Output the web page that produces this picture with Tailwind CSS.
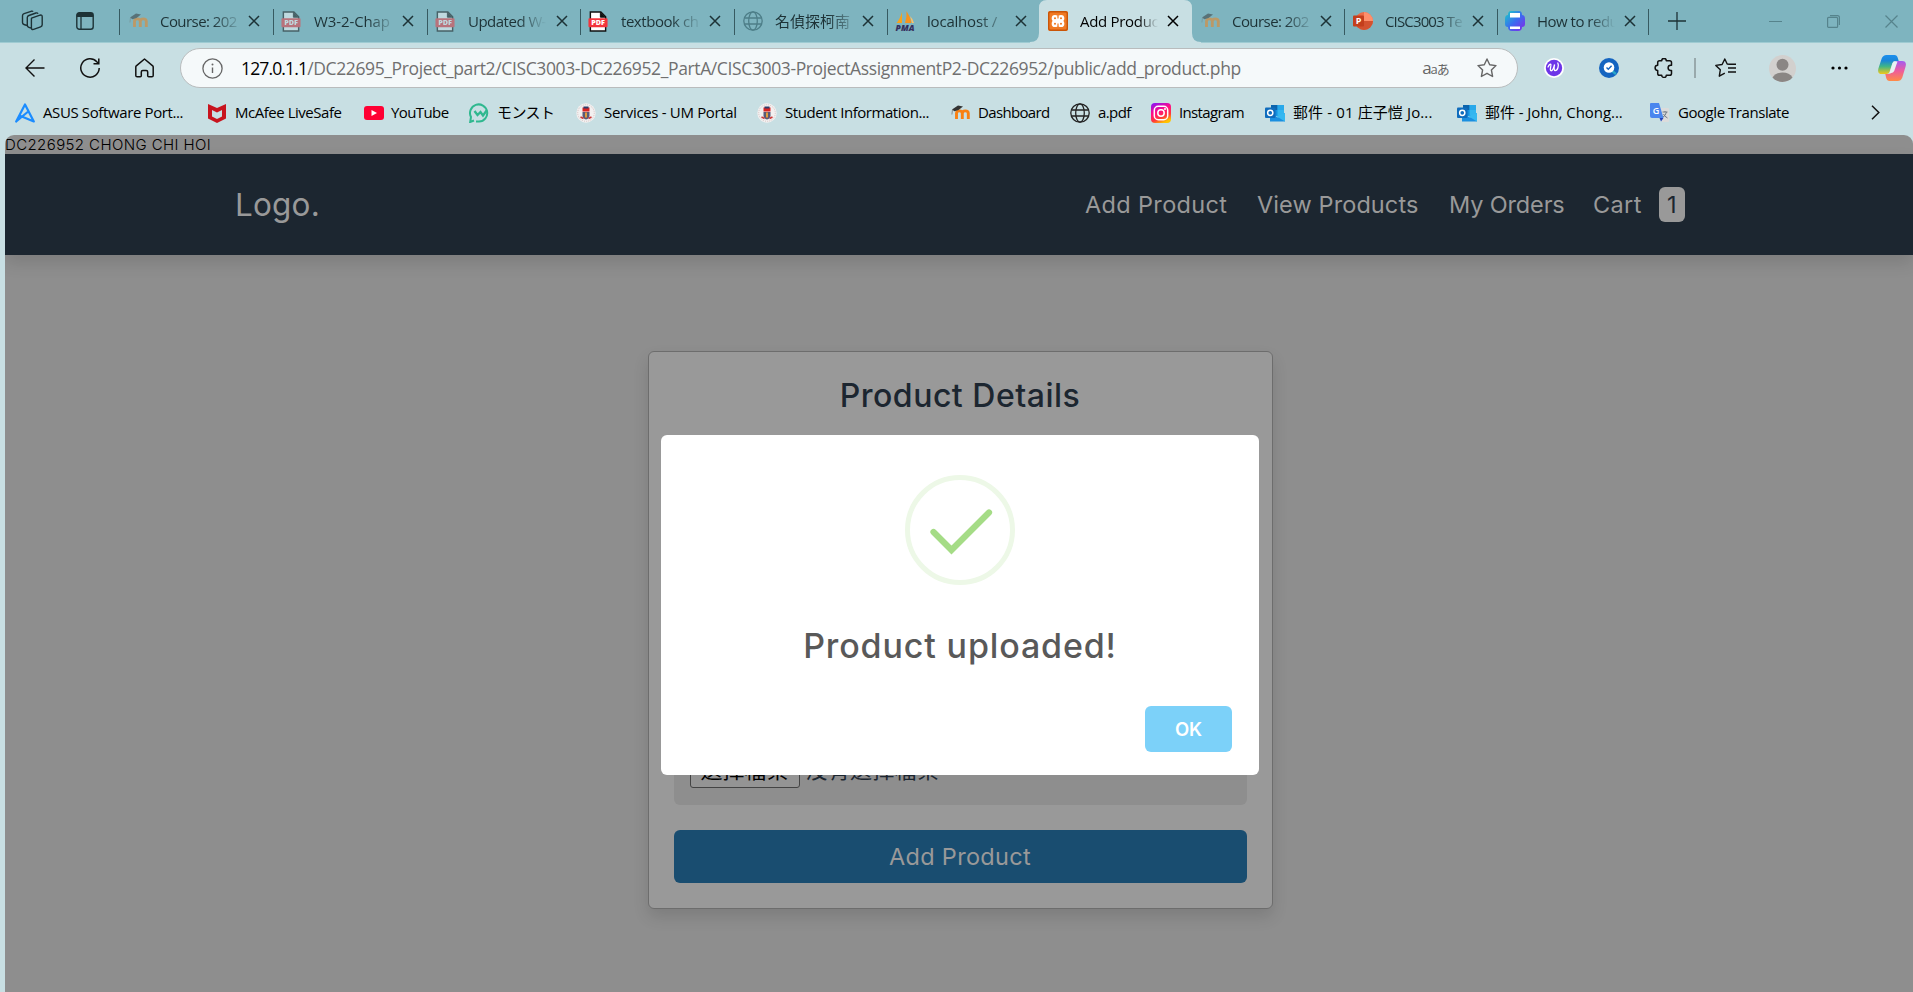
<!DOCTYPE html>
<html lang="zh-Hant">
<head>
<meta charset="utf-8">
<title>Add Product</title>
<script src="https://cdn.jsdelivr.net/npm/@tailwindcss/browser@4"></script>
</head>
<body class="w-[1913px] h-[992px] overflow-hidden bg-[#c8dfe3] font-['Open_Sans','Noto_Sans_CJK_TC',sans-serif] text-black">
<svg class="absolute size-0">
  <symbol id="x" viewBox="0 0 12 12"><path d="M1 1l10 10M11 1L1 11" fill="none" stroke="currentColor" stroke-width="1.5"/></symbol>
  <symbol id="moodle" viewBox="0 0 20 20"><path d="M5.500 16V10.500q0-2.600 2.900-2.600t2.900 2.600V16M11.300 10.500q0-2.600 3-2.600t3 2.600V16" fill="none" stroke="#f98012" stroke-width="2.900"/><path d="M1 6.500l6-4 5 1-4.500 3.500-4 1.200z" fill="#333"/><path d="M1.500 6.500l-.6 5" stroke="#777" stroke-width=".8"/></symbol>
  <symbol id="pdf" viewBox="0 0 20 22"><path d="M2 1h11l5 5v15H2z" fill="#fff" stroke="#111" stroke-width="1.500"/><path d="M12.500 1v5.500H18" fill="#111" stroke="#111"/><rect x="0" y="7.500" width="20" height="9.500" rx="1" fill="#f3343b"/><text x="10" y="15" font-family="Open Sans" font-weight="800" font-size="7.500" text-anchor="middle" fill="#fff">PDF</text></symbol>
  <symbol id="globe" viewBox="0 0 20 20"><g fill="none" stroke="currentColor" stroke-width="1.300"><circle cx="10" cy="10" r="9.200"/><ellipse cx="10" cy="10" rx="4.300" ry="9.200"/><path d="M1.500 7h17M1.500 13h17"/></g></symbol>
  <symbol id="um" viewBox="0 0 20 20"><circle cx="10" cy="10" r="9.700" fill="#f3f0f0"/><circle cx="10" cy="10" r="8.300" fill="none" stroke="#d5c3c3" stroke-width="1" stroke-dasharray="1 1"/><path d="M6.500 4.500h7v4h-7z" fill="#d92323"/><path d="M7.500 3.500h5v2h-5z" fill="#2c3c6b"/><path d="M6.500 9h7v3.500q0 3-3.500 4-3.500-1-3.500-4z" fill="#5b5a77"/><path d="M9 9.500h2v5H9z" fill="#e29a3a"/><path d="M4.500 14l3 1.500M15.500 14l-3 1.500" stroke="#c33" stroke-width="1.500"/></symbol>
  <symbol id="outlook" viewBox="0 0 20 20"><path d="M6 2h13v11H6z" fill="#1490df"/><path d="M6 2h6.500v5H6z" fill="#0a64ad"/><path d="M12.500 2H19v5h-6.500z" fill="#28a8ea"/><path d="M12.500 7H19v5h-6.500z" fill="#50d9ff" opacity=".5"/><path d="M5 18.500V10l8 4.500L20 10v8.500z" fill="#1a8fe0"/><path d="M20 18.500L11 13l9-3z" fill="#35b8f1"/><rect x="0" y="4.500" width="10.500" height="10.500" rx="1" fill="#0f6cbd"/><circle cx="5.250" cy="9.800" r="2.600" fill="none" stroke="#fff" stroke-width="1.500"/></symbol>
  <linearGradient id="pr" x1="0" y1="0" x2="1" y2="1"><stop offset="0" stop-color="#18d0c4"/><stop offset=".5" stop-color="#3a6df0"/><stop offset="1" stop-color="#8a22e8"/></linearGradient>
  <linearGradient id="ig" x1="0.150" y1="0" x2=".6" y2="1"><stop offset="0" stop-color="#8a14f5"/><stop offset=".4" stop-color="#ff0a8a"/><stop offset=".75" stop-color="#ff3a3a"/><stop offset="1" stop-color="#ffc400"/></linearGradient>
  <linearGradient id="c1" x1="0" y1="0" x2="0" y2="1"><stop offset="0" stop-color="#1b8fee"/><stop offset=".3" stop-color="#1a86d8"/><stop offset=".6" stop-color="#3fb587"/><stop offset="1" stop-color="#f2c81a"/></linearGradient>
  <linearGradient id="c2" x1="0" y1="0" x2="0" y2="1"><stop offset="0" stop-color="#a35af0"/><stop offset=".5" stop-color="#ee5c9c"/><stop offset="1" stop-color="#ff8b45"/></linearGradient>
</svg>

<!-- Tab strip -->
<header class="flex h-[43px] border-b border-[#9fcbd2] bg-[#7eb4bf] text-[15px] text-[#1d3236]">
  <div class="flex w-[119px] items-center gap-[32px] pl-[21px]">
    <svg class="w-[23px] h-[22px]" viewBox="0 0 23 22" fill="none" stroke="#1d3236" stroke-width="1.400" stroke-linejoin="round"><path d="M10.500 8.200l8.500-3q2.200-.6 2.200 1.500v8q0 1.500-1.600 2.100l-7 2.600q-2.200.6-2.200-1.400V9.600q0-1 .1-1.400z"/><path d="M10 18l-2.200-.7q-1.500-.5-1.500-2V7.600q0-1.500 1.600-2.100l7-2.500q1.600-.4 2.100.8"/><path d="M6 15.500l-3-1q-1.500-.5-1.500-2V5.800q0-1.500 1.600-2.100l7-2.400q1.500-.4 2 .4"/></svg>
    <svg class="w-[18px] h-[18px]" viewBox="0 0 18 18"><rect x=".8" y=".8" width="16.400" height="16.400" rx="2.500" fill="none" stroke="#1d3236" stroke-width="1.400"/><path d="M.8 5V3Q.8.800 3 .8h12q2.200 0 2.200 2.200v2z" fill="#1d3236"/><path d="M5 5v12" stroke="#1d3236" stroke-width="1.300"/></svg>
  </div>
  <div class="relative flex w-[154px] items-center pl-[10px]"><i class="absolute left-0 top-[9px] h-[26px] w-px bg-[#375a61]"></i><svg class="size-5 opacity-50"><use href="#moodle"/></svg><span class="ml-[11px] w-[78px] overflow-hidden whitespace-nowrap tracking-[-0.55px] [mask-image:linear-gradient(to_right,black_68%,rgba(0,0,0,0.15))]">Course: 202</span><svg class="ml-[10px] size-3"><use href="#x"/></svg></div>
  <div class="relative flex w-[154px] items-center pl-[8px]"><i class="absolute left-0 top-[9px] h-[26px] w-px bg-[#375a61]"></i><svg class="w-5 h-[21px] opacity-50"><use href="#pdf"/></svg><span class="ml-[13px] w-[78px] overflow-hidden whitespace-nowrap tracking-[-0.1px] [mask-image:linear-gradient(to_right,black_68%,rgba(0,0,0,0.15))]">W3-2-Chap</span><svg class="ml-[10px] size-3"><use href="#x"/></svg></div>
  <div class="relative flex w-[153px] items-center pl-[8px]"><i class="absolute left-0 top-[9px] h-[26px] w-px bg-[#375a61]"></i><svg class="w-5 h-[21px] opacity-50"><use href="#pdf"/></svg><span class="ml-[13px] w-[78px] overflow-hidden whitespace-nowrap tracking-[-0.5px] [mask-image:linear-gradient(to_right,black_65%,transparent)]">Updated W-</span><svg class="ml-[10px] size-3"><use href="#x"/></svg></div>
  <div class="relative flex w-[154px] items-center pl-[8px]"><i class="absolute left-0 top-[9px] h-[26px] w-px bg-[#375a61]"></i><svg class="w-5 h-[21px]"><use href="#pdf"/></svg><span class="ml-[13px] w-[78px] overflow-hidden whitespace-nowrap tracking-[-0.45px] [mask-image:linear-gradient(to_right,black_65%,rgba(0,0,0,0.1))]">textbook ch</span><svg class="ml-[10px] size-3"><use href="#x"/></svg></div>
  <div class="relative flex w-[153px] items-center pl-[9px]"><i class="absolute left-0 top-[9px] h-[26px] w-px bg-[#375a61]"></i><svg class="size-5 text-[#4d7e88]"><use href="#globe"/></svg><span class="ml-[12px] w-[78px] overflow-hidden whitespace-nowrap [mask-image:linear-gradient(to_right,black_68%,rgba(0,0,0,0.2))]">名偵探柯南</span><svg class="ml-[9px] size-3"><use href="#x"/></svg></div>
  <div class="relative flex w-[153px] items-center pl-[8px]"><i class="absolute left-0 top-[9px] h-[26px] w-px bg-[#375a61]"></i>
    <svg class="size-5" viewBox="0 0 20 20"><path d="M7 1v11H1.500Q5 8 7 1z" fill="#f7a21b"/><path d="M11.500 0q4 6 5 12h-6.500q2-6 1.500-12z" fill="#f7931e"/><path d="M15 5q3 3 4 7h-2z" fill="#fbc36b"/><text x="10" y="19.500" font-family="Open Sans" font-style="italic" font-weight="800" font-size="8.500" text-anchor="middle" textLength="19" fill="#35305e">PMA</text></svg>
    <span class="ml-[12px] w-[78px] overflow-hidden whitespace-nowrap tracking-[-0.2px] [mask-image:linear-gradient(to_right,black_65%,rgba(0,0,0,0.2))]">localhost /</span><svg class="ml-[10px] size-3"><use href="#x"/></svg></div>
  <div class="relative h-[43px] w-[152px] text-black">
    <svg class="absolute -left-[10px] top-0 w-[171px] h-[43px]" viewBox="0 0 171 43"><path d="M0 43v-1q9 0 9-9V8Q9 0 17 0h137q8 0 8 8v25q0 9 9 9v1z" fill="#c8dfe3"/></svg>
    <div class="relative flex h-[42px] items-center pl-[8px]">
      <svg class="size-5" viewBox="0 0 20 20"><rect width="20" height="20" rx="2" fill="#f07a24"/><rect x=".7" y=".7" width="18.600" height="18.600" rx="2" fill="none" stroke="#c95508" stroke-width="1.400"/><g fill="none" stroke="#fff" stroke-width="2.300"><circle cx="7" cy="7.300" r="2.200"/><circle cx="13" cy="7.300" r="2.200"/><circle cx="7" cy="12.700" r="2.200"/><circle cx="13" cy="12.700" r="2.200"/></g><path d="M8 8.500h4v3H8z" fill="#fff"/><path d="M10 5v2.500M10 12.500V15" stroke="#f07a24" stroke-width="1.200"/></svg>
      <span class="ml-[12px] w-[78px] overflow-hidden whitespace-nowrap tracking-[-0.3px] [mask-image:linear-gradient(to_right,black_75%,transparent)]">Add Produc</span><svg class="ml-[9px] size-3"><use href="#x"/></svg>
    </div>
  </div>
  <div class="relative flex w-[152px] items-center pl-[9px]"><svg class="size-5 opacity-50"><use href="#moodle"/></svg><span class="ml-[11px] w-[78px] overflow-hidden whitespace-nowrap tracking-[-0.55px] [mask-image:linear-gradient(to_right,black_68%,rgba(0,0,0,0.15))]">Course: 202</span><svg class="ml-[10px] size-3"><use href="#x"/></svg></div>
  <div class="relative flex w-[153px] items-center pl-[9px]"><i class="absolute left-0 top-[9px] h-[26px] w-px bg-[#375a61]"></i>
    <svg class="size-5" viewBox="0 0 20 20"><circle cx="11" cy="10" r="9" fill="#ed6c47"/><path d="M11 1a9 9 0 0 1 9 9h-9z" fill="#ff8f6b"/><path d="M20 10a9 9 0 0 1-18 0z" fill="#d35230"/><rect x="0" y="4.500" width="11" height="11" rx="1" fill="#c43e1c"/><text x="5.500" y="13.300" font-family="Open Sans" font-weight="700" font-size="9" text-anchor="middle" fill="#fff">P</text></svg>
    <span class="ml-[12px] w-[78px] overflow-hidden whitespace-nowrap tracking-[-0.85px] [mask-image:linear-gradient(to_right,black_70%,rgba(0,0,0,0.1))]">CISC3003 Te</span><svg class="ml-[9px] size-3"><use href="#x"/></svg></div>
  <div class="relative flex w-[152px] items-center pl-[8px]"><i class="absolute left-0 top-[9px] h-[26px] w-px bg-[#375a61]"></i><i class="absolute right-0 top-[9px] h-[26px] w-px bg-[#375a61]"></i>
    <svg class="size-5" viewBox="0 0 20 20"><path d="M6 0h8q3 0 3 4 3 0 3 4v5q0 3-3 3 0 4-4 4H7q-4 0-4-4-3 0-3-3V8q0-4 3-4 0-4 3-4z" fill="url(#pr)"/><rect x="5" y="2" width="10" height="4.500" fill="#fff"/><rect x="5" y="15.500" width="10" height="2.500" fill="#fff"/></svg>
    <span class="ml-[12px] w-[78px] overflow-hidden whitespace-nowrap tracking-[-0.5px] [mask-image:linear-gradient(to_right,black_68%,transparent)]">How to redu</span><svg class="ml-[9px] size-3"><use href="#x"/></svg></div>
  <div class="flex flex-1 items-center pl-[19px]">
    <svg class="size-[18px]" viewBox="0 0 18 18"><path d="M9 0v18M0 9h18" stroke="#1d3236" stroke-width="1.300"/></svg>
    <svg class="ml-[83px] w-[13px] h-px" viewBox="0 0 13 1"><path d="M0 .5h13" stroke="#56838c"/></svg>
    <svg class="ml-[45px] size-[13px]" viewBox="0 0 13 13" fill="none" stroke="#56838c" stroke-width="1.200"><rect x=".6" y="2.400" width="10" height="10" rx="1"/><path d="M3 .6h7.500q1.900 0 1.900 1.900V10"/></svg>
    <svg class="ml-[45px] size-[13px]" viewBox="0 0 13 13"><path d="M.5.500l12 12M12.500.500l-12 12" stroke="#56838c" stroke-width="1.200"/></svg>
  </div>
</header>

<!-- Toolbar -->
<div class="flex h-[50px] items-center pl-[7px]">
  <div class="flex w-[55px] justify-center"><svg class="size-[20px]" viewBox="0 0 20 20" fill="none" stroke="#111" stroke-width="1.400"><path d="M19.500 10H1M9.500 1.500L1 10l8.500 8.500"/></svg></div>
  <div class="flex w-[55px] justify-center"><svg class="size-[20px]" viewBox="0 0 20 20" fill="none" stroke="#111" stroke-width="1.500"><path d="M19.200 10A9.200 9.200 0 1 1 16.800 3.800L18.500 5.500M18.800.500v5.300h-5.300"/></svg></div>
  <div class="flex w-[55px] justify-center"><svg class="w-[19px] h-[20px]" viewBox="0 0 19 20" fill="none" stroke="#111" stroke-width="1.500" stroke-linejoin="round"><path d="M9.500 1L1.300 7.800q-.5.500-.5 1.200v8.500q0 1.300 1.300 1.300h3.200q1 0 1-1V14q0-1.500 1.500-1.500h3.400q1.500 0 1.500 1.500v3.800q0 1 1 1h3.200q1.300 0 1.300-1.300V9q0-.7-.5-1.200z"/></svg></div>
  <div class="ml-[8px] flex h-[40px] w-[1338px] shrink-0 items-center rounded-full border border-[#b9bcbd] bg-[#f5f9fa] pl-[21px] pr-[20px]">
    <svg class="size-[21px]" viewBox="0 0 21 21"><circle cx="10.500" cy="10.500" r="9.600" fill="none" stroke="#666" stroke-width="1.300"/><path d="M10.500 9.500V15" stroke="#666" stroke-width="1.400"/><circle cx="10.500" cy="6.500" r="1" fill="#666"/></svg>
    <span class="ml-[18px] whitespace-nowrap text-[17.5px] tracking-[-0.38px] text-[#707070]"><span class="tracking-[-0.85px] text-black">127.0.1.1</span>/DC22695_Project_part2/CISC3003-DC226952_PartA/CISC3003-ProjectAssignmentP2-DC226952/public/add_product.php</span>
    <span class="ml-auto flex items-baseline whitespace-nowrap text-[#666]"><span class="text-[17px] tracking-[-1.2px]">a</span><span class="text-[13px] tracking-[-0.8px]">aあ</span></span>
    <svg class="ml-[28px] size-[20px]" viewBox="0 0 20 20"><path d="M10 1l2.700 5.800 6.300.8-4.600 4.400 1.200 6.500L10 15.300l-5.600 3.200L5.600 12 1 7.600l6.300-.8z" fill="none" stroke="#666" stroke-width="1.400" stroke-linejoin="round"/></svg>
  </div>
  <div class="ml-[8px] flex w-[55px] justify-center"><svg class="size-5" viewBox="0 0 20 20"><circle cx="10" cy="10" r="10" fill="#fff"/><circle cx="10" cy="10" r="8.200" fill="#6d35e8"/><path d="M4 9q1.800-3.500 2.800-2.800c.9.800-1.600 5.500.1 6.500 1.900.6 3.300-4.500 3.700-6.200-.6 2.300-1 6 .7 6.100 2.200 0 4-5 2.500-7.600" fill="none" stroke="#fff" stroke-width="1.300" stroke-linecap="round"/></svg></div>
  <div class="flex w-[55px] justify-center"><svg class="size-5" viewBox="0 0 20 20"><circle cx="10" cy="10" r="10" fill="#1464c0"/><path d="M13 13l4 3" stroke="#2aa7c9" stroke-width="2.200"/><circle cx="10" cy="9.500" r="5.300" fill="#fff"/><path d="M7.500 9.500l1.800 1.800 3.300-3.500" fill="none" stroke="#1464c0" stroke-width="1.400"/></svg></div>
  <div class="flex w-[55px] justify-center"><svg class="size-5" viewBox="0 0 20 20"><path d="M5.500 2.700h2.200a2.300 2.300 0 0 1 4.600 0h3.400q1.800 0 1.800 1.800v2.700h-.8a2.500 2.500 0 0 0 0 5.200h.8v3q0 1.800-1.800 1.800h-3.400a2.300 2.300 0 0 1-4.600 0H5.500q-1.800 0-1.800-1.800v-3a2.500 2.500 0 0 1 0-5.200V4.500q0-1.800 1.800-1.800z" fill="none" stroke="#111" stroke-width="1.500" stroke-linejoin="round"/></svg></div>
  <i class="ml-[3px] h-5 w-[2px] bg-[#99a9ac]"></i>
  <div class="ml-[2px] flex w-[55px] justify-center"><svg class="w-[21px] h-5" viewBox="0 0 21 20" fill="none" stroke="#111" stroke-width="1.400" stroke-linejoin="round"><path d="M14.500 6.300l-2.300-.3L9.800 1 7.100 6.500.8 7.400l4.500 4.400-1 6.400 5.500-3M13 10h8M13 14h8M14 6.300h7"/></svg></div>
  <div class="ml-[1px] flex w-[57px] justify-center"><svg class="size-[27px]" viewBox="0 0 27 27"><circle cx="13.500" cy="13.500" r="13.500" fill="#d2d0ce"/><circle cx="13.500" cy="9.700" r="6" fill="#8a8684"/><path d="M3.500 22.500q3-5 10-5t10 5a13.500 13.500 0 0 1-20 0z" fill="#8a8684"/></svg></div>
  <div class="flex w-[56px] justify-center"><svg class="w-[17px] h-[4px]" viewBox="0 0 17 4"><circle cx="2" cy="2" r="1.600"/><circle cx="8.500" cy="2" r="1.600"/><circle cx="15" cy="2" r="1.600"/></svg></div>
  <svg class="ml-[11px] size-7 shrink-0" viewBox="0 0 28 28"><path d="M8.500 1h8q2.500 0 3.300 3l.9 3H17q-2 0-2.700 2.200L11.500 18q-.8 2-3 2H4q-5 0-3.600-5.500L3.700 4.500Q5 1 8.500 1z" fill="url(#c1)"/><path d="M19.500 27h-8q-2.500 0-3.300-3l-.9-4H11q2 0 2.700-2.200l2.800-8.800q.8-2 3-2H24q5 0 3.600 5.500l-3.300 11Q23 27 19.500 27z" fill="url(#c2)"/><path d="M11.500 19l3-9.500q.7-2 2.500-2h2.500l-3.300 9.500q-1 2-3 2z" fill="#e8f2f4"/></svg>
</div>

<!-- Bookmarks -->
<nav class="flex h-[42px] items-center pl-[15px] pb-[3px] text-[15px] [&>a]:flex [&>a]:h-full [&>a]:shrink-0 [&>a]:items-center [&>a]:gap-2 [&>a]:whitespace-nowrap [&>a>svg]:size-5 [&>a>svg]:shrink-0">
  <a class="w-[192px] tracking-[-0.38px]"><svg viewBox="0 0 20 20"><path d="M1.200 18.500L10 1.500l8.800 17L5 12.800M1.200 18.500L12 9.500" fill="none" stroke="#1b8cff" stroke-width="2.200" stroke-linejoin="round" stroke-linecap="round"/></svg>ASUS Software Port...</a>
  <a class="w-[157px] tracking-[-0.47px]"><svg viewBox="0 0 20 20"><path d="M1 1l9 4 9-4v14.500L10 20l-9-4.500zM5 7v6.500l5 2.500 5-2.500V7l-5 2.500z" fill="#c8141e" fill-rule="evenodd"/></svg>McAfee LiveSafe</a>
  <a class="w-[105px] tracking-[-0.6px]"><svg viewBox="0 0 20 20"><rect y="3" width="20" height="14" rx="3" fill="#ff0033"/><path d="M7.500 7v6l5.500-3z" fill="#fff"/></svg><span class="-ml-px">YouTube</span></a>
  <a class="w-[107px] tracking-[-0.6px]"><svg viewBox="0 0 20 20"><path d="M5 17.500L1.200 19l.8-5A8.600 8.600 0 1 1 10 18.600H7" fill="none" stroke="#2fb88f" stroke-width="2"/><path d="M5.500 8l3 4 3-3 2.500 3.500L18 7" fill="none" stroke="#2fb88f" stroke-width="2.300"/></svg>モンスト</a>
  <a class="w-[181px] tracking-[-0.33px]"><svg><use href="#um"/></svg>Services - UM Portal</a>
  <a class="w-[194px] tracking-[-0.45px]"><svg><use href="#um"/></svg>Student Information...</a>
  <a class="w-[119px] tracking-[-0.65px]"><svg><use href="#moodle"/></svg><span class="-ml-px">Dashboard</span></a>
  <a class="w-[81px] tracking-[-0.6px]"><svg class="text-[#222]"><use href="#globe"/></svg>a.pdf</a>
  <a class="w-[114px] tracking-[-0.65px]"><svg viewBox="0 0 20 20"><rect width="20" height="20" rx="4" fill="url(#ig)"/><rect x="3.300" y="3.300" width="13.400" height="13.400" rx="4" fill="none" stroke="#fff" stroke-width="1.500"/><circle cx="10" cy="10" r="3.200" fill="none" stroke="#fff" stroke-width="1.500"/><circle cx="14" cy="6" r="1" fill="#fff"/></svg>Instagram</a>
  <a class="w-[192px]"><svg><use href="#outlook"/></svg><span class="tracking-[0.12px]">郵件 - 01 庄子愷 Jo...</span></a>
  <a class="w-[193px]"><svg><use href="#outlook"/></svg><span class="tracking-[-0.05px]">郵件 - John, Chong...</span></a>
  <a class="w-[222px] tracking-[-0.45px]"><svg viewBox="0 0 20 20"><path d="M8 5h10q1 0 1 1v12q0 1-1 1h-6z" fill="#dcdcdc"/><path d="M12.500 9h5M15 8v1M16.500 9q-1 4-4 5.500M13.500 11q1 2.500 4 4" stroke="#707a85" fill="none"/><path d="M1 0h8l4.500 15H2q-2 0-2-2V1q0-1 1-1z" fill="#4a86ee"/><path d="M9.500 15h4L11 18.500z" fill="#2743b8"/><text x="5.800" y="11" font-family="Open Sans" font-weight="600" font-size="9" text-anchor="middle" fill="#fff">G</text></svg>Google Translate</a>
  <svg class="-ml-px w-[9px] h-[15px]" viewBox="0 0 9 15"><path d="M1 .8l6.800 6.700L1 14.200" fill="none" stroke="#111" stroke-width="1.500"/></svg>
</nav>

<!-- Page -->
<main class="relative ml-[5px] h-[857px] overflow-hidden rounded-t-[9px] bg-[#8e8e8e] font-['Inter','Noto_Sans_CJK_TC',sans-serif]">
  <div class="h-[19px] whitespace-nowrap text-[15px] font-light leading-[19px] tracking-[0.4px]">DC226952 CHONG CHI HOI</div>
  <div class="flex h-[101px] items-center bg-[#1c2630] pl-[230px] pr-[228px] text-[23.5px] tracking-[0.35px] text-[#999] shadow-[0_8px_16px_rgba(0,0,0,0.12)]">
    <span class="text-[31.5px] tracking-[0.2px]">Logo.</span>
    <div class="ml-auto flex items-center">
      <span class="w-[172px]">Add Product</span><span class="w-[192px] tracking-[0.1px]">View Products</span><span class="w-[144px] -tracking-[0.15px]">My Orders</span><span class="w-[66px]">Cart</span><span class="flex h-[35px] w-[26px] items-center justify-center rounded-[6px] bg-[#999] text-[#1c2630]">1</span>
    </div>
  </div>
  <form class="mx-auto mt-[96px] flex h-[558px] w-[625px] translate-x-px flex-col rounded-[6px] border border-[#6d6d6d] bg-[#999] px-[25px] pb-[25px] shadow-[0_8px_16px_rgba(0,0,0,0.12)]">
    <h3 class="mt-[21px] text-center text-[32px] leading-[46px] font-medium tracking-[0.5px] text-[#1c2630]">Product Details</h3>
    <div class="mt-auto flex h-[62px] items-center rounded-[6px] bg-[#8e8e8e] px-[16px] pb-[4px] text-[22px] leading-[26px] text-[#1c2630]">
      <span class="h-[31px] w-[110px] rounded-[3px] border border-[#444] bg-[#949494] text-center leading-[25px] text-black">選擇檔案</span><span class="ml-[6px] leading-[31px] h-[35px] tracking-[0.3px]">沒有選擇檔案</span>
    </div>
    <div class="mt-[25px] flex h-[53px] items-center justify-center rounded-[6px] bg-[#194d70] pt-px text-[23.5px] tracking-[0.3px] text-[#999]">Add Product</div>
  </form>

  <!-- Alert dialog -->
  <div class="absolute left-[656px] top-[300px] flex h-[340px] w-[598px] flex-col items-center rounded-[6px] bg-white">
    <svg class="mt-[40px] size-[110px] shrink-0" viewBox="0 0 110 110"><circle cx="55" cy="55" r="52.500" fill="none" stroke="#edf8e7" stroke-width="5"/><path d="M28.500 57L46.500 75L84 37.500" fill="none" stroke="#a5dc86" stroke-width="6.200" stroke-linecap="round"/></svg>
    <div class="mt-[40px] text-[34px] leading-[42px] font-medium tracking-[0.85px] text-[#595959]">Product uploaded!</div>
    <div class="mt-[39px] mr-[27px] flex h-[46px] w-[87px] items-center justify-center self-end rounded-[6px] bg-[#7cd1f9] pt-px text-[18.5px] font-semibold text-white">OK</div>
  </div>
</main>
</body>
</html>
